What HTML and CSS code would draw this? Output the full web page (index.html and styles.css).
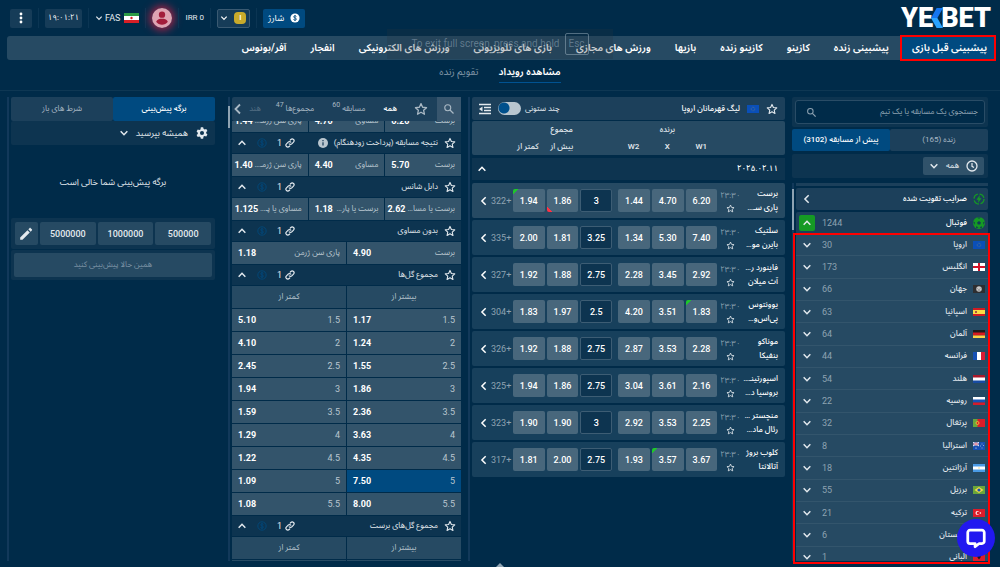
FILE: index.html
```html
<!DOCTYPE html>
<html lang="fa" dir="rtl">
<head>
<meta charset="utf-8">
<title>YEKBET</title>
<link rel="stylesheet" href="styles.css">
</head>
<body>
<svg class="defs" width="0" height="0" aria-hidden="true">
  <symbol id="star" viewBox="0 0 24 24"><path d="M12 2.800l2.800 6.200 6.700.7-5 4.600 1.400 6.700-5.900-3.400-5.900 3.400 1.400-6.700-5-4.600 6.700-.7z" fill="none" stroke="currentColor" stroke-width="2.200" stroke-linejoin="round"/></symbol>
  <symbol id="down" viewBox="0 0 12 12"><path d="M2 4l4 4 4-4" fill="none" stroke="currentColor" stroke-width="1.800"/></symbol>
  <symbol id="up" viewBox="0 0 12 12"><path d="M2 8l4-4 4 4" fill="none" stroke="currentColor" stroke-width="1.800"/></symbol>
  <symbol id="left" viewBox="0 0 12 12"><path d="M8 1.500L3.500 6 8 10.500" fill="none" stroke="currentColor" stroke-width="1.800"/></symbol>
  <symbol id="link" viewBox="0 0 24 24"><g fill="none" stroke="currentColor" stroke-width="2.800" stroke-linecap="round"><path d="M10 14a4.500 4.500 0 0 0 6.400 0l4-4a4.500 4.500 0 0 0-6.400-6.400l-1.500 1.500"/><path d="M14 10a4.500 4.500 0 0 0-6.400 0l-4 4a4.500 4.500 0 0 0 6.400 6.400l1.500-1.500"/></g></symbol>
  <symbol id="coin" viewBox="0 0 24 24"><circle cx="12" cy="12" r="10" fill="none" stroke="currentColor" stroke-width="2"/><path d="M15.500 8.500c-.6-1.300-2-1.800-3.500-1.800-2 0-3.300 1-3.300 2.500 0 3.600 6.800 1.800 6.800 5.500 0 1.600-1.500 2.600-3.500 2.600-1.700 0-3.200-.7-3.700-2.200M12 4.700v14.600" fill="none" stroke="currentColor" stroke-width="1.800"/></symbol>
  <symbol id="search" viewBox="0 0 24 24"><circle cx="9.500" cy="9.500" r="6" fill="none" stroke="currentColor" stroke-width="2.200"/><path d="M14 14l7 7" stroke="currentColor" stroke-width="2.600"/></symbol>
  <symbol id="eu" viewBox="0 0 24 16"><path fill="#0a4fb8" d="M0 0h24v16H0z"/><circle cx="12" cy="8" r="3.600" fill="none" stroke="#a99a55" stroke-width="1" stroke-dasharray="1 1.200"/></symbol>
</svg>

<header class="top">
  <a class="logo" href="#" dir="ltr" aria-label="YEKBET"><span>YE</span><svg viewBox="0 0 15 25"><path d="M7 0h8L8 12.500H0z" fill="#1676f0"/><path d="M0 12.500h8L15 25H7z" fill="#2ba3ff"/></svg><span>BET</span></a>
  <div class="tools" dir="ltr">
    <button class="box menu" aria-label="منو"><svg viewBox="0 0 4 12"><circle cx="2" cy="2" r="1.400"/><circle cx="2" cy="6" r="1.400"/><circle cx="2" cy="10" r="1.400"/></svg></button>
    <i class="sep"></i>
    <span class="box clock">۱۹:۰۱:۲۱</span>
    <i class="sep"></i>
    <button class="lang"><svg class="i8"><use href="#down"/></svg>FAS<svg class="flag-ir" viewBox="0 0 15 10"><path fill="#fff" d="M0 0h15v10H0z"/><path fill="#2c9b45" d="M0 0h15v3H0z"/><path fill="#d81f26" d="M0 7h15v3H0z"/><circle cx="7.500" cy="5" r="1.200" fill="#d81f26"/></svg></button>
    <i class="sep"></i>
    <button class="avatar" aria-label="حساب"><svg viewBox="0 0 24 24"><circle cx="12" cy="12" r="12" fill="#dfa3b2"/><circle cx="12" cy="8" r="3.800" fill="#a31d3b"/><path d="M5 16.500c1-3 4.500-3.600 7-3.600s6 .6 7 3.600a8.500 8.500 0 0 1-14 0z" fill="#a31d3b"/></svg></button>
    <i class="sep"></i>
    <span class="money">IRR 0</span>
    <i class="sep"></i>
    <button class="box bonus"><svg class="i8"><use href="#down"/></svg><b>I</b></button>
    <i class="sep"></i>
    <button class="box charge">شارژ<svg viewBox="0 0 24 24"><circle cx="12" cy="12" r="11" fill="#fff"/><path d="M15.500 8.500c-.6-1.300-2-1.800-3.500-1.800-2 0-3.300 1-3.300 2.500 0 3.600 6.800 1.800 6.800 5.500 0 1.600-1.500 2.600-3.500 2.600-1.700 0-3.200-.7-3.700-2.200M12 4.700v14.600" fill="none" stroke="#004a80" stroke-width="2"/></svg></button>
  </div>
</header>

<nav class="nav">
  <a class="on" href="#">پیشبینی قبل بازی</a><a href="#">پیشبینی زنده</a><a href="#">کازینو</a><a href="#">کازینو زنده</a><a href="#">بازیها</a><a href="#">ورزش های مجازی</a><a href="#">بازی های تلویزیونی</a><a href="#">ورزش های الکترونیکی</a><a href="#">انفجار</a><a href="#">آفر/بونوس</a>
  <div class="toast" dir="ltr">To exit full screen, press and hold <kbd>Esc</kbd></div>
</nav>
<nav class="subnav"><a class="on" href="#">مشاهده رویداد</a><a href="#">تقویم زنده</a></nav>

<main class="cols">
  <aside class="sports">
    <div class="panel finder"><label><input type="search" placeholder="جستجوی یک مسابقه یا یک تیم" aria-label="جستجو"><svg><use href="#search"/></svg></label></div>
    <div class="tabs"><button>زنده (165)</button><button class="on">پیش از مسابقه (3102)</button></div>
    <div class="panel filter"><button><svg class="i12" viewBox="0 0 12 12"><circle cx="6" cy="6" r="5" fill="none" stroke="currentColor" stroke-width="1.300"/><path d="M6 3v3.300l2 1.200" fill="none" stroke="currentColor" stroke-width="1.200"/></svg>همه<svg class="i10"><use href="#down"/></svg></button></div>
    <div class="track"><i class="thumb"></i>
      <div class="list">
        <div class="sliver"></div>
        <a class="sport" href="#"><svg class="i12 green" viewBox="0 0 24 24"><circle cx="12" cy="12" r="10" fill="none" stroke="currentColor" stroke-width="2.600" stroke-dasharray="12 3.700"/><path d="M13.500 4L7 13.500h4L10 20l7-9.500h-4z" fill="currentColor"/></svg><b>ضرایب تقویت شده</b><svg class="arrow"><use href="#left"/></svg></a>
        <a class="sport" href="#"><svg class="i12" viewBox="0 0 24 24"><circle cx="12" cy="12" r="12" fill="#159a24"/><path d="M12 8l3.800 2.800-1.400 4.400H9.600l-1.400-4.400zM8 1l4 2.500L16 1zM.5 9l3.500 2-1.500 4.500zM23.500 9L20 11l1.500 4.500zM6 22l1-4 4 3.500zM18 22l-1-4-4 3.500z" fill="#123b55"/></svg><b>فوتبال</b><span>1244</span><em><svg class="i10"><use href="#up"/></svg></em></a>
        <div class="lands">
          <a href="#"><svg class="flag"><use href="#eu"/></svg><b>اروپا</b><span>30</span><svg class="arrow"><use href="#down"/></svg></a>
          <a href="#"><svg class="flag" viewBox="0 0 24 16"><path fill="#fff" d="M0 0h24v16H0z"/><path fill="#d4142a" d="M10 0h4v16h-4zM0 6h24v4H0z"/></svg><b>انگلیس</b><span>173</span><svg class="arrow"><use href="#down"/></svg></a>
          <a href="#"><svg class="flag" viewBox="0 0 24 16"><path fill="#2e2e30" d="M0 0h24v16H0z"/><circle cx="12" cy="8" r="5.500" fill="#c9c9c9"/><path d="M8 6l4 4 4-5M9 11h6" stroke="#777" fill="none"/></svg><b>جهان</b><span>66</span><svg class="arrow"><use href="#down"/></svg></a>
          <a href="#"><svg class="flag" viewBox="0 0 24 16"><path fill="#d01c22" d="M0 0h24v16H0z"/><path fill="#fbdc45" d="M0 4h24v8H0z"/><path fill="#b2553a" d="M4 6h4v4H4z"/></svg><b>اسپانیا</b><span>63</span><svg class="arrow"><use href="#down"/></svg></a>
          <a href="#"><svg class="flag" viewBox="0 0 24 16"><path fill="#1c1a1a" d="M0 0h24v6H0z"/><path fill="#d61a1f" d="M0 5h24v6H0z"/><path fill="#fbd344" d="M0 11h24v5H0z"/></svg><b>آلمان</b><span>64</span><svg class="arrow"><use href="#down"/></svg></a>
          <a href="#"><svg class="flag" viewBox="0 0 24 16"><path fill="#fff" d="M0 0h24v16H0z"/><path fill="#1650b4" d="M0 0h8v16H0z"/><path fill="#d61c35" d="M16 0h8v16h-8z"/></svg><b>فرانسه</b><span>44</span><svg class="arrow"><use href="#down"/></svg></a>
          <a href="#"><svg class="flag" viewBox="0 0 24 16"><path fill="#fff" d="M0 0h24v16H0z"/><path fill="#a81a2b" d="M0 0h24v5H0z"/><path fill="#174ba3" d="M0 11h24v5H0z"/></svg><b>هلند</b><span>54</span><svg class="arrow"><use href="#down"/></svg></a>
          <a href="#"><svg class="flag" viewBox="0 0 24 16"><path fill="#fff" d="M0 0h24v6H0z"/><path fill="#1552b8" d="M0 5h24v6H0z"/><path fill="#d61c2b" d="M0 11h24v5H0z"/></svg><b>روسیه</b><span>22</span><svg class="arrow"><use href="#down"/></svg></a>
          <a href="#"><svg class="flag" viewBox="0 0 24 16"><path fill="#dc1c2a" d="M0 0h24v16H0z"/><path fill="#6aa53b" d="M0 0h9v16H0z"/><circle cx="9" cy="8" r="3" fill="#d62a22" stroke="#f3d43c" stroke-width="1.500"/></svg><b>پرتغال</b><span>32</span><svg class="arrow"><use href="#down"/></svg></a>
          <a href="#"><svg class="flag" viewBox="0 0 24 16"><path fill="#1650b4" d="M0 0h24v16H0z"/><path d="M0 0l12 8M12 0L0 8M6 0v8M0 4h12" stroke="#fff" stroke-width="2"/><path d="M6 0v8M0 4h12" stroke="#d61c35"/><circle cx="6" cy="12" r="1.200" fill="#fff"/><path d="M18 3v2M18 11v2M15 7v2M21 6v2" stroke="#fff"/></svg><b>استرالیا</b><span>8</span><svg class="arrow"><use href="#down"/></svg></a>
          <a href="#"><svg class="flag" viewBox="0 0 24 16"><path fill="#fff" d="M0 0h24v16H0z"/><path fill="#4a9be6" d="M0 0h24v5H0zM0 11h24v5H0z"/><circle cx="12" cy="8" r="1.500" fill="#f0d878"/></svg><b>آرژانتین</b><span>18</span><svg class="arrow"><use href="#down"/></svg></a>
          <a href="#"><svg class="flag" viewBox="0 0 24 16"><path fill="#6aa53b" d="M0 0h24v16H0z"/><path fill="#f5dc48" d="M12 2l9 6-9 6-9-6z"/><circle cx="12" cy="8" r="3.200" fill="#1650b4"/></svg><b>برزیل</b><span>55</span><svg class="arrow"><use href="#down"/></svg></a>
          <a href="#"><svg class="flag" viewBox="0 0 24 16"><path fill="#dc1c2a" d="M0 0h24v16H0z"/><circle cx="9" cy="8" r="4" fill="#fff"/><circle cx="10.300" cy="8" r="3.100" fill="#dc1c2a"/><circle cx="15" cy="8" r="1.300" fill="#fff"/></svg><b>ترکیه</b><span>21</span><svg class="arrow"><use href="#down"/></svg></a>
          <a href="#"><svg class="flag" viewBox="0 0 24 16"><path fill="#1b8a43" d="M0 0h24v16H0z"/></svg><b>عربستان</b><span>6</span><svg class="arrow"><use href="#down"/></svg></a>
          <a href="#"><svg class="flag" viewBox="0 0 24 16"><path fill="#dc1c2a" d="M0 0h24v16H0z"/><path fill="#1c1a1a" d="M8 4l4 2 4-2-1 5-3 4-3-4z"/></svg><b>آلبانی</b><span>1</span><svg class="arrow"><use href="#down"/></svg></a>
        </div>
      </div>
      <div class="mark"></div>
    </div>
  </aside>

  <section class="games track">
    <div class="list">
      <div class="league"><svg class="i12"><use href="#star"/></svg><svg class="flag"><use href="#eu"/></svg><b>لیگ قهرمانان اروپا</b><label class="multi">چند ستونی<input type="checkbox" role="switch"></label><svg class="i12" viewBox="0 0 12 12"><path d="M0 1.500h12M5 4.500h7M5 7.500h7M0 10.500h12" stroke="currentColor" stroke-width="1.500"/><path d="M0 6l3.500-2.500v5z" fill="currentColor"/></svg></div>
      <div class="heads grid"><b class="win">برنده</b><b class="sum">مجموع</b><b class="w1">W1</b><b>X</b><b>W2</b><b class="over">بیش از</b><b>کمتر از</b></div>
      <div class="date"><b>۲۰۲۵.۰۲.۱۱</b><svg class="i10"><use href="#up"/></svg></div>
      <div class="matches">
        <article class="grid hot"><div class="teams"><b>برست</b><b>پاری سـ…</b></div><div class="when">۲۳:۳۰<svg><use href="#star"/></svg></div><button>6.20</button><button>4.70</button><button>1.44</button><i></i><button class="line">3</button><button class="fall">1.86</button><button class="rise">1.94</button><span dir="ltr">322+</span><svg class="go"><use href="#left"/></svg></article>
        <article class="grid"><div class="teams"><b>سلتیک</b><b>بایرن مو…</b></div><div class="when">۲۳:۳۰<svg><use href="#star"/></svg></div><button>7.40</button><button>5.30</button><button>1.34</button><i></i><button class="line">3.25</button><button>1.81</button><button>2.00</button><span dir="ltr">335+</span><svg class="go"><use href="#left"/></svg></article>
        <article class="grid"><div class="teams"><b>فاینورد ر…</b><b>آث میلان</b></div><div class="when">۲۳:۳۰<svg><use href="#star"/></svg></div><button>2.92</button><button>3.45</button><button>2.28</button><i></i><button class="line">2.75</button><button>1.88</button><button>1.92</button><span dir="ltr">327+</span><svg class="go"><use href="#left"/></svg></article>
        <article class="grid"><div class="teams"><b>یوونتوس</b><b>پی‌اس‌و…</b></div><div class="when">۲۳:۳۰<svg><use href="#star"/></svg></div><button class="rise">1.83</button><button>3.51</button><button>4.20</button><i></i><button class="line">2.5</button><button>1.97</button><button>1.83</button><span dir="ltr">304+</span><svg class="go"><use href="#left"/></svg></article>
        <article class="grid"><div class="teams"><b>موناکو</b><b>بنفیکا</b></div><div class="when">۲۳:۳۰<svg><use href="#star"/></svg></div><button>2.28</button><button>3.53</button><button>2.87</button><i></i><button class="line">2.75</button><button>1.88</button><button>1.92</button><span dir="ltr">326+</span><svg class="go"><use href="#left"/></svg></article>
        <article class="grid"><div class="teams"><b>اسپورتینـ…</b><b>بروسیا د…</b></div><div class="when">۲۳:۳۰<svg><use href="#star"/></svg></div><button>2.16</button><button>3.61</button><button>3.04</button><i></i><button class="line">2.75</button><button>1.86</button><button>1.94</button><span dir="ltr">325+</span><svg class="go"><use href="#left"/></svg></article>
        <article class="grid"><div class="teams"><b>منچستر …</b><b>رئال ماد…</b></div><div class="when">۲۳:۳۰<svg><use href="#star"/></svg></div><button>2.25</button><button>3.53</button><button>2.92</button><i></i><button class="line">3</button><button>1.90</button><button>1.90</button><span dir="ltr">323+</span><svg class="go"><use href="#left"/></svg></article>
        <article class="grid"><div class="teams"><b>کلوب بروژ</b><b>آتالانتا</b></div><div class="when">۲۳:۳۰<svg><use href="#star"/></svg></div><button>3.67</button><button class="rise">3.57</button><button>1.93</button><i></i><button class="line">2.75</button><button>2.00</button><button>1.81</button><span dir="ltr">317+</span><svg class="go"><use href="#left"/></svg></article>
      </div>
    </div>
  </section>

  <section class="markets track"><i class="thumb"></i>
    <div class="list">
      <div class="groups"><button class="find" aria-label="جستجو"><svg class="i12"><use href="#search"/></svg></button><svg class="i14"><use href="#star"/></svg><button class="on">همه</button><button>مسابقه <sup>60</sup></button><button>مجموع‌ها <sup>47</sup></button><button class="faded">هند</button><svg class="i12 next"><use href="#left"/></svg></div>
      <div class="cells cut"><button><span>برست</span><b>6.20</b></button><button><span>مساوی</span><b>4.70</b></button><button><span>پاری سن ژرمـ…</span><b>1.44</b></button></div>
      <h3><svg class="i12"><use href="#star"/></svg>نتیجه مسابقه (پرداخت زودهنگام)<svg class="i10 info" viewBox="0 0 12 12"><circle cx="6" cy="6" r="6" fill="currentColor"/><path d="M6 5v4M6 2.500v1.500" stroke="#0e3350" stroke-width="1.400"/></svg><span><svg class="i10"><use href="#link"/></svg>1</span><svg class="i10 cash"><use href="#coin"/></svg><svg class="i10"><use href="#up"/></svg></h3>
      <div class="cells"><button><span>برست</span><b>5.70</b></button><button><span>مساوی</span><b>4.40</b></button><button><span>پاری سن ژرمـ…</span><b>1.40</b></button></div>
      <h3><svg class="i12"><use href="#star"/></svg>دابل شانس<span><svg class="i10"><use href="#link"/></svg>1</span><svg class="i10 cash"><use href="#coin"/></svg><svg class="i10"><use href="#up"/></svg></h3>
      <div class="cells"><button><span>برست یا مسا…</span><b>2.62</b></button><button><span>برست یا پار…</span><b>1.18</b></button><button><span>مساوی یا پـ…</span><b>1.125</b></button></div>
      <h3><svg class="i12"><use href="#star"/></svg>بدون مساوی<span><svg class="i10"><use href="#link"/></svg>1</span><svg class="i10 cash"><use href="#coin"/></svg><svg class="i10"><use href="#up"/></svg></h3>
      <div class="cells"><button><span>برست</span><b>4.90</b></button><button><span>پاری سن ژرمن</span><b>1.18</b></button></div>
      <h3><svg class="i12"><use href="#star"/></svg>مجموع گل‌ها<span><svg class="i10"><use href="#link"/></svg>1</span><svg class="i10 cash"><use href="#coin"/></svg><svg class="i10"><use href="#up"/></svg></h3>
      <div class="cells caps"><span>بیشتر از</span><span>کمتر از</span></div>
      <div class="cells goals"><button><span>1.5</span><b>1.17</b></button><button><span>1.5</span><b>5.10</b></button></div>
      <div class="cells goals"><button><span>2</span><b>1.24</b></button><button><span>2</span><b>4.10</b></button></div>
      <div class="cells goals"><button><span>2.5</span><b>1.55</b></button><button><span>2.5</span><b>2.45</b></button></div>
      <div class="cells goals"><button><span>3</span><b>1.86</b></button><button><span>3</span><b>1.94</b></button></div>
      <div class="cells goals"><button><span>3.5</span><b>2.36</b></button><button><span>3.5</span><b>1.59</b></button></div>
      <div class="cells goals"><button><span>4</span><b>3.63</b></button><button><span>4</span><b>1.29</b></button></div>
      <div class="cells goals"><button><span>4.5</span><b>4.35</b></button><button><span>4.5</span><b>1.22</b></button></div>
      <div class="cells goals"><button class="on"><span>5</span><b>7.50</b></button><button><span>5</span><b>1.09</b></button></div>
      <div class="cells goals"><button><span>5.5</span><b>8.00</b></button><button><span>5.5</span><b>1.08</b></button></div>
      <h3><svg class="i12"><use href="#star"/></svg>مجموع گل‌های برست<span><svg class="i10"><use href="#link"/></svg>1</span><svg class="i10 cash"><use href="#coin"/></svg><svg class="i10"><use href="#up"/></svg></h3>
      <div class="cells caps"><span>بیشتر از</span><span>کمتر از</span></div>
      <div class="cells caps"><span></span><span></span></div>
    </div>
  </section>

  <aside class="slip track">
    <div class="list">
      <div class="tabs"><button class="on">برگه پیش‌بینی</button><button>شرط های باز</button></div>
      <button class="panel ask"><svg class="i14" viewBox="0 0 24 24"><path fill="currentColor" fill-rule="evenodd" d="M10 2h4l.6 2.800 2 1.100 2.700-.9 2 3.500-2.100 1.900v2.200l2.100 1.900-2 3.500-2.700-.9-2 1.100L14 22h-4l-.6-2.800-2-1.100-2.700.9-2-3.500 2.100-1.900v-2.200L2.700 9.500l2-3.500 2.700.9 2-1.100zM12 8.500a3.500 3.500 0 1 0 0 7 3.500 3.500 0 0 0 0-7z"/></svg>همیشه بپرسید<svg class="i10"><use href="#down"/></svg></button>
      <p>برگه پیش‌بینی شما خالی است</p>
      <div class="panel stakes"><button>500000</button><button>1000000</button><button>5000000</button><button class="pen" aria-label="ویرایش"><svg class="i14" viewBox="0 0 24 24"><path fill="currentColor" d="M2 18L14.500 5.500l4 4L6 22H2zM16 4l2-2c.8-.8 1.500-.6 2 0l2 2c.7.700.6 1.400 0 2l-2 2z"/></svg></button></div>
      <div class="panel place"><button disabled>همین حالا پیش‌بینی کنید</button></div>
    </div>
  </aside>
</main>
<footer class="foot"><svg class="i8" viewBox="0 0 8 8"><path d="M0 6l4-4 4 4z" fill="#8ea3b2"/></svg></footer>
<button class="chat" aria-label="گفتگو"><svg viewBox="0 0 24 24"><path d="M5.500 3.500h13a2.500 2.500 0 0 1 2.500 2.500v9.500a2.500 2.500 0 0 1-2.500 2.500h-3L11 21.500V18H5.500A2.500 2.500 0 0 1 3 15.500V6a2.500 2.500 0 0 1 2.500-2.500z" fill="none" stroke="#fff" stroke-width="3" stroke-linejoin="round"/></svg></button>
</body>
</html>
```
FILE: styles.css
```css
* { box-sizing: border-box; }
html, body { height: 100%; }
body {
  margin: 0;
  display: flex;
  flex-direction: column;
  position: relative;
  overflow: hidden;
  background: #002b49;
  color: #e3e9ee;
  font: 8px/14px Roboto, "Noto Sans Arabic", "Open Sans", "DejaVu Sans", sans-serif;
}
button, input { font: inherit; color: inherit; background: none; border: 0; margin: 0; padding: 0; }
a { color: inherit; text-decoration: none; }
b { font-weight: 500; }
svg { display: block; flex: none; }
.defs { position: absolute; }
.i8 { width: 8px; height: 8px; }
.i10 { width: 10px; height: 10px; }
.i12 { width: 12px; height: 12px; }
.i14 { width: 14px; height: 14px; }
.flag { width: 12px; height: 8px; }
.green { color: #159a24; }

.top { display: flex; justify-content: space-between; align-items: center; height: 36px; padding: 0 9px 0 10px; flex: none; }
.logo { display: flex; align-items: center; color: #fff; font: 900 27px/30px Roboto, sans-serif; }
.logo svg { width: 14px; height: 20px; margin: 0 -3px; }
.tools { display: flex; align-items: center; gap: 6px; }
.sep { width: 1px; height: 20px; background: #0b3553; }
.box { display: flex; align-items: center; justify-content: center; height: 19px; border-radius: 2px; background: #163c58; color: #fff; }
.menu { width: 22px; }
.menu svg { height: 12px; fill: #fff; }
.clock { width: 37px; }
.lang { display: flex; align-items: center; gap: 2px; font-size: 9px; }
.flag-ir { width: 15px; height: 10px; margin-left: 2px; }
.avatar { border-radius: 50%; box-shadow: 0 0 8px 2px #b02045; }
.avatar svg { width: 20px; height: 20px; }
.bonus { width: 33px; gap: 6px; border: 1px solid #3a5a72; }
.bonus b { width: 12px; height: 12px; border-radius: 4px; background: #c9ab2b; line-height: 12px; }
.charge { gap: 6px; padding: 0 5px; background: #004a80; font-size: 9px; }
.charge svg { width: 10px; height: 10px; }

.nav { position: relative; display: flex; flex: none; height: 24px; margin: 0 5px 0 7px; border-radius: 3px; background: #264a63; color: #fff; font-size: 10px; font-weight: 600; line-height: 24px; white-space: nowrap; }
.nav a { padding: 0 12px; }
.nav .on { background: #004a80; outline: 2px solid #f00; outline-offset: -1px; padding: 0 8px 0 11px; }
.toast { position: absolute; left: 380px; top: -7px; width: 226px; height: 30px; display: flex; align-items: center; justify-content: center; gap: 5px; background: rgba(35, 50, 65, .25); color: rgba(170, 190, 203, .45); font: 10px/14px Roboto, sans-serif; }
.toast kbd { font: inherit; padding: 3px; border: 1px solid rgba(170, 190, 203, .45); border-radius: 2px; }
.subnav { display: flex; justify-content: center; gap: 20px; flex: none; height: 31px; padding-top: 2px; border-bottom: 1px solid #0e3753; font-size: 10px; line-height: 20px; color: #8196a7; }
.subnav .on { height: 21px; border-bottom: 1px solid #005291; color: #fff; font-weight: 600; }

.cols { flex: 1; min-height: 0; display: grid; grid-template-columns: 196fr 317fr 233fr 214fr; grid-template-rows: minmax(0, 1fr); gap: 7px; padding: 6px 12px 0 7px; }
.cols > * { min-width: 0; }
.panel { background: #0d3450; border-radius: 2px; }
.tabs { display: flex; flex: none; color: #a9b8c4; }
.tabs button { flex: 1; height: 24px; background: #1c405b; border-radius: 2px; }
.tabs .on { background: #004a80; color: #fff; font-weight: 500; }
.track { position: relative; display: flex; min-height: 0; padding-left: 4px; background: linear-gradient(#12395a, #12395a) left / 2px 100% no-repeat; }
.track > .list { flex: 1; min-width: 0; display: flex; flex-direction: column; overflow: hidden; }
.thumb { position: absolute; left: 0; top: 9px; width: 2px; height: 22px; background: #8ea3b2; }

.sports { display: flex; flex-direction: column; }
.finder { padding: 3px; margin-bottom: 2px; }
.finder label { display: flex; align-items: center; height: 24px; padding: 0 6px 0 10px; border: 1px solid #294c66; border-radius: 3px; background: #002b49; color: #8ea3b2; }
.finder input { flex: 1; min-width: 0; }
.finder input::placeholder { color: #8ea3b2; opacity: 1; }
.finder svg { width: 11px; height: 11px; }
.sports .tabs button { height: 22px; }
.filter { display: flex; height: 24px; margin-top: 3px; padding: 3px 4px; }
.filter button { display: flex; align-items: center; gap: 7px; padding: 0 6px; border-radius: 2px; background: #30526a; }
.sports .track { flex: 1; margin-top: 5px; }
.sports .thumb { top: 6px; height: 41px; }
.sliver { flex: none; height: 3px; background: #1c405b; }
.sport, .lands a { display: flex; align-items: center; padding: 0 3px; }
.sport { flex: none; height: 22px; margin-top: 2px; background: #1c405b; border-radius: 2px; }
.sport b, .lands b { flex: 1; margin-right: 6px; }
.sport span, .lands span { width: 24px; margin-left: 10px; direction: ltr; text-align: left; color: #8ea3b2; font-size: 9px; }
.sport b { color: #fff; }
.arrow { width: 10px; height: 10px; margin-left: 3px; }
.sport em { display: grid; place-items: center; width: 16px; height: 16px; border-radius: 2px; background: #159a24; }
.sport span { margin-left: 7px; }
.lands { flex: none; display: grid; grid-auto-rows: 1fr; height: 335px; background: #264a63; }
.lands a { border-bottom: 1px solid #33556c; }
.mark { position: absolute; inset: 50px -2px -3px 1px; border: 2px solid #f00; }

.league { display: flex; align-items: center; gap: 7px; flex: none; height: 23px; padding: 0 7px; background: #1c405b; border-radius: 2px; }
.league b { flex: 1; color: #fff; }
.multi { display: flex; align-items: center; gap: 4px; }
.multi input { appearance: none; width: 23px; height: 13px; border-radius: 7px; background: radial-gradient(circle at 6px 6px, #00508c 5px, #b9c6cf 6px); }
.grid { display: grid; grid-template-columns: 35fr 22fr 32fr 32fr 32fr 2fr 32fr 32fr 32fr 20fr 9fr; column-gap: 2px; padding: 0 7px; }
.grid > * { min-width: 0; }
.heads { flex: none; height: 34px; margin-top: 1px; background: #264a63; border-radius: 2px; grid-template-rows: 17px 17px; align-items: center; text-align: center; white-space: nowrap; }
.win { grid-column: 3 / 6; }
.sum { grid-column: 7 / 10; }
.w1 { grid-column: 3; }
.over { grid-column: 8; }
.date { display: flex; align-items: center; justify-content: space-between; flex: none; height: 22px; margin: 3px 0; padding: 0 7px 0 5px; background: #0d3450; color: #fff; }
.matches { display: grid; gap: 2px; }
.matches article { height: 35px; align-items: center; background: #17405c; border-radius: 2px; font-size: 9px; }
.matches .hot { background: #264a63; }
.teams { display: grid; color: #fff; font-size: 8px; white-space: nowrap; }
.when { display: flex; flex-direction: column; align-items: center; color: #8ea3b2; font-size: 8px; line-height: 13px; }
.when svg { width: 9px; height: 9px; color: #e3e9ee; margin-top: 2px; }
.matches button { height: 23px; border-radius: 2px; background: #48677c; color: #fff; font-weight: 500; }
.matches .line { border: 1px solid #3d5d74; background: #0d3450; }
.matches .rise { background: linear-gradient(135deg, #1fc62c 4px, #48677c 4px); }
.matches .fall { background: linear-gradient(45deg, #ff3144 4px, #48677c 4px); }
.matches span { text-align: left; color: #8ea3b2; }
.go { width: 10px; height: 10px; color: #fff; }

.groups { display: flex; align-items: center; flex: none; height: 24px; background: #1c405b; border-radius: 2px; color: #a9b8c4; white-space: nowrap; }
.groups > .i14 { margin: 0 9px 0 8px; }
.groups .find { display: grid; flex: none; place-items: center; width: 24px; height: 24px; background: #38566e; }
.groups .on { color: #fff; font-weight: 500; }
.groups sup { font-size: 7px; line-height: 1px; }
.groups button + button, .groups .on { padding: 0 9px; }
.groups button.faded { padding: 0 6px 0 0; opacity: .4; }
.groups .next { margin-right: auto; }
.markets h3 { display: flex; align-items: center; gap: 6px; flex: none; height: 20px; margin: 1px 0; padding: 0 5px; background: #0d3450; font: inherit; white-space: nowrap; }
.markets h3 span { display: flex; align-items: center; gap: 3px; margin-right: auto; font-size: 9px; }
.cash { color: #004a80; margin: 0 4px; }
.info { color: #b9c6cf; }
.cells { display: grid; grid-auto-flow: column; grid-auto-columns: minmax(0, 1fr); column-gap: 1px; flex: none; height: 22px; }
.cells + .cells { margin-top: 1px; }
.cells button { display: flex; align-items: center; justify-content: space-between; gap: 2px; padding: 0 6px; background: #33546b; white-space: nowrap; }
.cells button span { color: #b9c6cf; }
.cells.goals button { font-size: 9px; }
.cells b { color: #fff; font-size: 9px; font-weight: 700; }
.cells .on { background: #004a80; }
.caps span { background: #264a63; text-align: center; line-height: 22px; color: #b9c6cf; }
.groups + .cut { height: 11px; margin: 0; overflow: hidden; align-content: end; }
.cut button { height: 22px; }

.slip { margin-right: 6px; }
.ask { display: flex; align-items: center; gap: 7px; flex: none; height: 24px; padding: 0 6px; font-size: 9px; }
.slip p { margin: 30px 0 29px; text-align: center; font-size: 9px; line-height: 14px; }
.stakes { display: flex; gap: 2px; padding: 4px; height: 31px; }
.stakes button { flex: 1; border-radius: 2px; background: #264a63; font-size: 9px; font-weight: 500; }
.stakes .pen { flex: none; display: grid; place-items: center; width: 23px; }
.place { margin-top: 1px; padding: 3px; }
.place button { display: block; width: 100%; height: 24px; border-radius: 2px; background: #264a63; color: #7a91a3; }

.foot { display: grid; place-items: center; flex: none; height: 6px; }
.chat { position: absolute; right: 5px; bottom: 10px; display: grid; place-items: center; width: 38px; height: 38px; border-radius: 50%; background: #2218f0; }
.chat svg { width: 22px; height: 22px; }
```
